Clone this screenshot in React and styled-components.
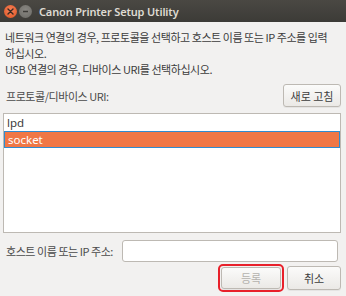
import React from 'react';
import styled, { createGlobalStyle } from 'styled-components';

const Global = createGlobalStyle`
  html, body { margin: 0; padding: 0; }
  body {
    width: 346px;
    height: 296px;
    overflow: hidden;
    background: #f2f1f0;
    font-family: "Noto Sans", "Noto Sans CJK KR", sans-serif;
  }
`;

const Window = styled.div`
  width: 346px;
  height: 296px;
  display: flex;
  flex-direction: column;
  background: #f2f1f0;
  color: #3c3c3c;
`;

const TitleBar = styled.div`
  height: 22px;
  display: flex;
  align-items: center;
  padding-left: 4px;
  gap: 1px;
  background: linear-gradient(#4a4843, #3c3b37);
`;

const Dot = styled.div`
  width: 13px;
  height: 13px;
  border-radius: 50%;
  display: flex;
  align-items: center;
  justify-content: center;
  background: ${p => (p.$close ? 'radial-gradient(circle at 50% 40%, #f4825b, #e0531f)' : 'radial-gradient(circle at 50% 40%, #8a8883, #6a6964)')};
  margin-right: 1px;
`;

const Title = styled.span`
  margin-left: 5px;
  font-family: "Noto Sans", sans-serif;
  font-weight: 600;
  font-size: 11px;
  letter-spacing: -0.15px;
  color: #dfdbd2;
`;

const Body = styled.div`
  flex: 1;
  display: flex;
  flex-direction: column;
  padding: 7px 5px 0 3px;
`;

const Intro = styled.div`
  padding-left: 2px;
  font-family: "Noto Sans CJK KR", sans-serif;
  font-size: 11px;
  letter-spacing: -0.45px;
  line-height: 16px;
  color: #3c3c3c;
  white-space: nowrap;
`;

const UriRow = styled.div`
  display: flex;
  align-items: center;
  justify-content: space-between;
  margin-top: 7px;
  padding-left: 3px;
`;

const Label = styled.span`
  font-family: "Noto Sans CJK KR", sans-serif;
  font-size: 11px;
  letter-spacing: -0.45px;
  color: #4a4a4a;
`;

const Button = styled.button`
  height: ${p => p.$h || 24}px;
  width: ${p => p.$w}px;
  padding: 0;
  border: 1px solid #bdb9b3;
  border-radius: 3px;
  background: linear-gradient(#fbfbfa, #ebe9e6);
  font-family: "Noto Sans CJK KR", sans-serif;
  font-size: 11px;
  color: ${p => (p.disabled ? '#b4b2ae' : '#3c3c3c')};
  box-shadow: 0 1px 0 rgba(0, 0, 0, 0.05);
`;

const List = styled.div`
  margin-top: 6px;
  height: 118px;
  border: 1px solid #bdb9b3;
  background: #fff;
  display: flex;
  flex-direction: column;
`;

const Item = styled.div`
  height: ${p => (p.$sel ? 15 : 17)}px;
  display: flex;
  align-items: center;
  padding-left: 3px;
  font-family: "Noto Sans", sans-serif;
  font-size: 11.5px;
  color: ${p => (p.$sel ? '#fff' : '#3c3c3c')};
  background: ${p => (p.$sel ? '#f07746' : '#fff')};
  border: ${p => (p.$sel ? '1px solid #2f8bd0' : 'none')};
`;

const HostRow = styled.div`
  display: flex;
  align-items: center;
  margin-top: 7px;
  padding-left: 3px;
  gap: 8px;
`;

const Input = styled.div`
  width: 214px;
  height: 20px;
  border: 1px solid #bdb9b3;
  border-radius: 3px;
  background: #fff;
  margin-left: auto;
  margin-right: 3px;
`;

const Actions = styled.div`
  display: flex;
  justify-content: flex-end;
  margin-top: 4px;
  gap: 3px;
`;

const Highlight = styled.div`
  border: 2px solid #e8202a;
  border-radius: 5px;
  padding: 1px;
  margin-top: -2px;
  height: 28px;
  box-sizing: border-box;
  display: flex;
`;

export default function App() {
  return (
    <>
      <Global />
      <Window>
        <TitleBar>
          <Dot $close>
            <svg width="7" height="7" viewBox="0 0 7 7">
              <path d="M1 1L6 6M6 1L1 6" stroke="#3a2a22" strokeWidth="1.4" strokeLinecap="round" />
            </svg>
          </Dot>
          <Dot>
            <svg width="7" height="7" viewBox="0 0 7 7">
              <path d="M1 3.5H6" stroke="#3c3b37" strokeWidth="1.5" />
            </svg>
          </Dot>
          <Title>Canon Printer Setup Utility</Title>
        </TitleBar>
        <Body>
          <Intro>
            네트워크 연결의 경우, 프로토콜을 선택하고 호스트 이름 또는 IP 주소를 입력
            <br />
            하십시오.
            <br />
            USB 연결의 경우, 디바이스 URI를 선택하십시오.
          </Intro>
          <UriRow>
            <Label>프로토콜/디바이스 URI:</Label>
            <Button $w={58} $h={23}>새로 고침</Button>
          </UriRow>
          <List>
            <Item>lpd</Item>
            <Item $sel>socket</Item>
          </List>
          <HostRow>
            <Label>호스트 이름 또는 IP 주소:</Label>
            <Input />
          </HostRow>
          <Actions>
            <Highlight>
              <Button $w={60} $h={22} disabled>등록</Button>
            </Highlight>
            <Button $w={54} $h={24}>취소</Button>
          </Actions>
        </Body>
      </Window>
    </>
  );
}
